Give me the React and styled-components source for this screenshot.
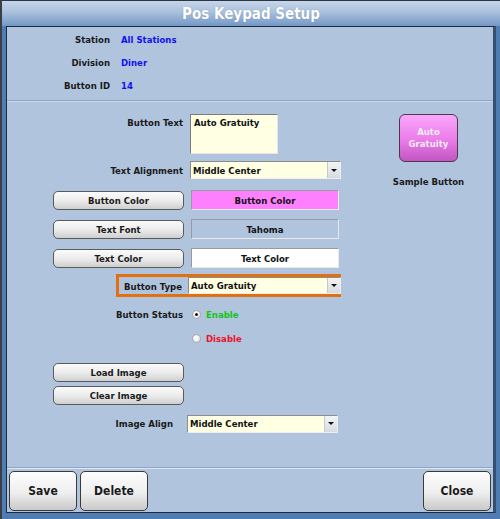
import React from "react";
import styled, { createGlobalStyle } from "styled-components";

const Global = createGlobalStyle`
  html, body { margin: 0; padding: 0; background: #3b3f44; }
  body { font-family: "DejaVu Sans Condensed", "DejaVu Sans", Tahoma, sans-serif; }
  * { box-sizing: border-box; }
`;

const Window = styled.div`
  width: 498px;
  height: 519px;
  margin-left: 2px;
  display: flex;
  flex-direction: column;
  background: #4f7db3;
  border-top: 1px solid #2c3540;
`;

const TitleBar = styled.div`
  height: 25px;
  flex: none;
  display: flex;
  align-items: center;
  justify-content: center;
  background: linear-gradient(#c6d6ea 0%, #a9c0dc 45%, #7398c6 100%);
  color: #fff;
  font-size: 15px;
  font-weight: bold;
  text-shadow: 0 0 1px rgba(40, 70, 110, 0.45);
`;

const Panel = styled.div`
  flex: 1;
  margin: 0 4px 6px 4px;
  display: flex;
  flex-direction: column;
  background: #b0c4de;
  border: 1px solid #1e2b3a;
  border-right: 3px solid #35506f;
`;

const InfoSection = styled.div`
  height: 74px;
  flex: none;
  display: flex;
  flex-direction: column;
  padding-top: 5px;
  gap: 9px;
  border-bottom: 1px solid #8aa6cb;
  box-shadow: 0 1px 0 #c9d7ea;
`;

const InfoRow = styled.div`
  display: flex;
  align-items: center;
  height: 14px;
  font-size: 9.5px;
  font-weight: bold;
`;

const InfoLabel = styled.span`
  width: 103px;
  text-align: right;
  color: #1a1a1a;
`;

const InfoValue = styled.span`
  margin-left: 11px;
  color: #1111f0;
`;

const FormSection = styled.div`
  flex: 1;
  display: flex;
  margin-top: 1px;
`;

const FormColumn = styled.div`
  width: 345px;
  display: flex;
  flex-direction: column;
  padding-left: 46px;
`;

const Row = styled.div`
  display: flex;
  align-items: ${(p) => p.$align || "center"};
  margin-top: ${(p) => p.$mt}px;
  height: ${(p) => p.$h}px;
`;

const Label = styled.span`
  width: ${(p) => p.$w || 130}px;
  flex: none;
  padding-top: ${(p) => p.$pt || 0}px;
  text-align: right;
  font-size: 9.5px;
  font-weight: bold;
  color: #1a1a1a;
`;

const Field = styled.div`
  margin-left: ${(p) => p.$ml || 7}px;
  display: flex;
  align-items: center;
`;

const TextArea = styled.div`
  width: 88px;
  height: 40px;
  background: #ffffe3;
  border: 1px solid;
  border-color: #7c7c7c #e6e6e6 #e6e6e6 #7c7c7c;
  padding: 2px 3px;
  font-size: 9.5px;
  font-weight: bold;
  color: #111;
`;

const Select = styled.div`
  width: ${(p) => p.$w || 151}px;
  height: ${(p) => p.$h || 18}px;
  display: flex;
  background: #ffffe3;
  border: 1px solid;
  border-color: #8c8c8c #eeeeee #eeeeee #8c8c8c;
  font-size: 9.5px;
  font-weight: bold;
  color: #111;
`;

const SelectText = styled.span`
  flex: 1;
  display: flex;
  align-items: center;
  padding-left: 2px;
`;

const DropButton = styled.span`
  width: 13px;
  display: flex;
  align-items: center;
  justify-content: center;
  background: linear-gradient(#f4f4f4, #d6dbe2);
  border-left: 1px solid #c8c8c8;
  &::after {
    content: "";
    border-left: 3px solid transparent;
    border-right: 3px solid transparent;
    border-top: 3px solid #111;
  }
`;

const GrayButton = styled.button`
  width: 131px;
  height: 19px;
  padding: 0;
  border: 1px solid #5a5a5a;
  border-radius: 5px;
  background: linear-gradient(#fbfbfb 0%, #ececec 50%, #cfcfcf 100%);
  font-family: inherit;
  font-size: 9.5px;
  font-weight: bold;
  color: #1a1a1a;
`;

const Swatch = styled.div`
  width: 148px;
  height: 20px;
  display: flex;
  align-items: center;
  justify-content: center;
  background: ${(p) => p.$bg};
  border: 1px solid;
  border-color: #9a9a9a #eaeaea #eaeaea #9a9a9a;
  font-size: 9.5px;
  font-weight: bold;
  color: #111;
`;

const TypeBox = styled.div`
  display: flex;
  align-items: center;
  width: 225px;
  height: 23px;
  margin-left: 63px;
  border: 3px solid #e2700f;
`;

const RadioLine = styled.label`
  display: flex;
  align-items: center;
  gap: 5px;
  font-size: 9.5px;
  font-weight: bold;
  color: ${(p) => p.$color};
`;

const RadioDot = styled.span`
  width: 9px;
  height: 9px;
  border-radius: 50%;
  background: radial-gradient(circle at 35% 35%, #ffffff, #e4e4e4);
  border: 1px solid #a8a8a8;
  display: flex;
  align-items: center;
  justify-content: center;
  &::after {
    content: "";
    width: 3px;
    height: 3px;
    border-radius: 50%;
    background: ${(p) => (p.$on ? "#111" : "transparent")};
  }
`;

const StatusStack = styled.div`
  margin-left: 9px;
  display: flex;
  flex-direction: column;
  gap: 13px;
`;

const PreviewColumn = styled.div`
  flex: 1;
  display: flex;
  flex-direction: column;
  align-items: center;
  padding-top: 12px;
  padding-left: 12px;
`;

const SampleButton = styled.div`
  width: 59px;
  height: 48px;
  display: flex;
  align-items: center;
  justify-content: center;
  text-align: center;
  border: 1px solid #4a3a4a;
  border-radius: 6px;
  background: linear-gradient(#fba6fb 0%, #ec80ec 50%, #c455c4 100%);
  color: #f5ecf5;
  font-size: 9.5px;
  font-weight: bold;
  line-height: 12px;
`;

const Caption = styled.div`
  margin-top: 14px;
  font-size: 9.5px;
  font-weight: bold;
  color: #1a1a1a;
`;

const ButtonBar = styled.div`
  height: 45px;
  flex: none;
  display: flex;
  align-items: center;
  gap: 3px;
  padding: 2px 2px 0 2px;
  border-top: 1px solid #8aa6cb;
  box-shadow: inset 0 1px 0 #dfe7f2;
`;

const BarButton = styled.button`
  width: 68px;
  height: 40px;
  padding: 0;
  margin-left: ${(p) => (p.$push ? "auto" : "0")};
  border: 1px solid #3a3a3a;
  border-radius: 5px;
  background: linear-gradient(#fdfdfd 0%, #eeeeee 55%, #c9c9c9 100%);
  font-family: inherit;
  font-size: 12px;
  font-weight: bold;
  color: #1a1a1a;
`;

const info = [
  ["Station", "All Stations"],
  ["Division", "Diner"],
  ["Button ID", "14"],
];

export default function App() {
  return (
    <>
      <Global />
      <Window>
        <TitleBar>Pos Keypad Setup</TitleBar>
        <Panel>
          <InfoSection>
            {info.map(([k, v]) => (
              <InfoRow key={k}>
                <InfoLabel>{k}</InfoLabel>
                <InfoValue>{v}</InfoValue>
              </InfoRow>
            ))}
          </InfoSection>
          <FormSection>
            <FormColumn>
              <Row $mt={12} $h={40} $align="flex-start">
                <Label $pt={3}>Button Text</Label>
                <Field>
                  <TextArea>Auto Gratuity</TextArea>
                </Field>
              </Row>
              <Row $mt={7} $h={18}>
                <Label>Text Alignment</Label>
                <Field>
                  <Select>
                    <SelectText>Middle Center</SelectText>
                    <DropButton />
                  </Select>
                </Field>
              </Row>
              <Row $mt={11} $h={20}>
                <GrayButton>Button Color</GrayButton>
                <Field>
                  <Swatch $bg="#ff80ff">Button Color</Swatch>
                </Field>
              </Row>
              <Row $mt={9} $h={20}>
                <GrayButton>Text Font</GrayButton>
                <Field>
                  <Swatch $bg="transparent">Tahoma</Swatch>
                </Field>
              </Row>
              <Row $mt={9} $h={20}>
                <GrayButton>Text Color</GrayButton>
                <Field>
                  <Swatch $bg="#ffffff">Text Color</Swatch>
                </Field>
              </Row>
              <Row $mt={6} $h={23}>
                <TypeBox>
                  <Label $w={63} $pt={2}>Button Type</Label>
                  <Field $ml={6}>
                    <Select $w={153} $h={17}>
                      <SelectText>Auto Gratuity</SelectText>
                      <DropButton />
                    </Select>
                  </Field>
                </TypeBox>
              </Row>
              <Row $mt={12} $h={40} $align="flex-start">
                <Label>Button Status</Label>
                <StatusStack>
                  <RadioLine $color="#13c413">
                    <RadioDot $on />
                    Enable
                  </RadioLine>
                  <RadioLine $color="#f0102a">
                    <RadioDot />
                    Disable
                  </RadioLine>
                </StatusStack>
              </Row>
              <Row $mt={14} $h={19}>
                <GrayButton>Load Image</GrayButton>
              </Row>
              <Row $mt={4} $h={19}>
                <GrayButton>Clear Image</GrayButton>
              </Row>
              <Row $mt={9} $h={19}>
                <Label $w={120}>Image Align</Label>
                <Field $ml={14}>
                  <Select $w={151}>
                    <SelectText>Middle Center</SelectText>
                    <DropButton />
                  </Select>
                </Field>
              </Row>
            </FormColumn>
            <PreviewColumn>
              <SampleButton>
                Auto
                <br />
                Gratuity
              </SampleButton>
              <Caption>Sample Button</Caption>
            </PreviewColumn>
          </FormSection>
          <ButtonBar>
            <BarButton>Save</BarButton>
            <BarButton>Delete</BarButton>
            <BarButton $push>Close</BarButton>
          </ButtonBar>
        </Panel>
      </Window>
    </>
  );
}
